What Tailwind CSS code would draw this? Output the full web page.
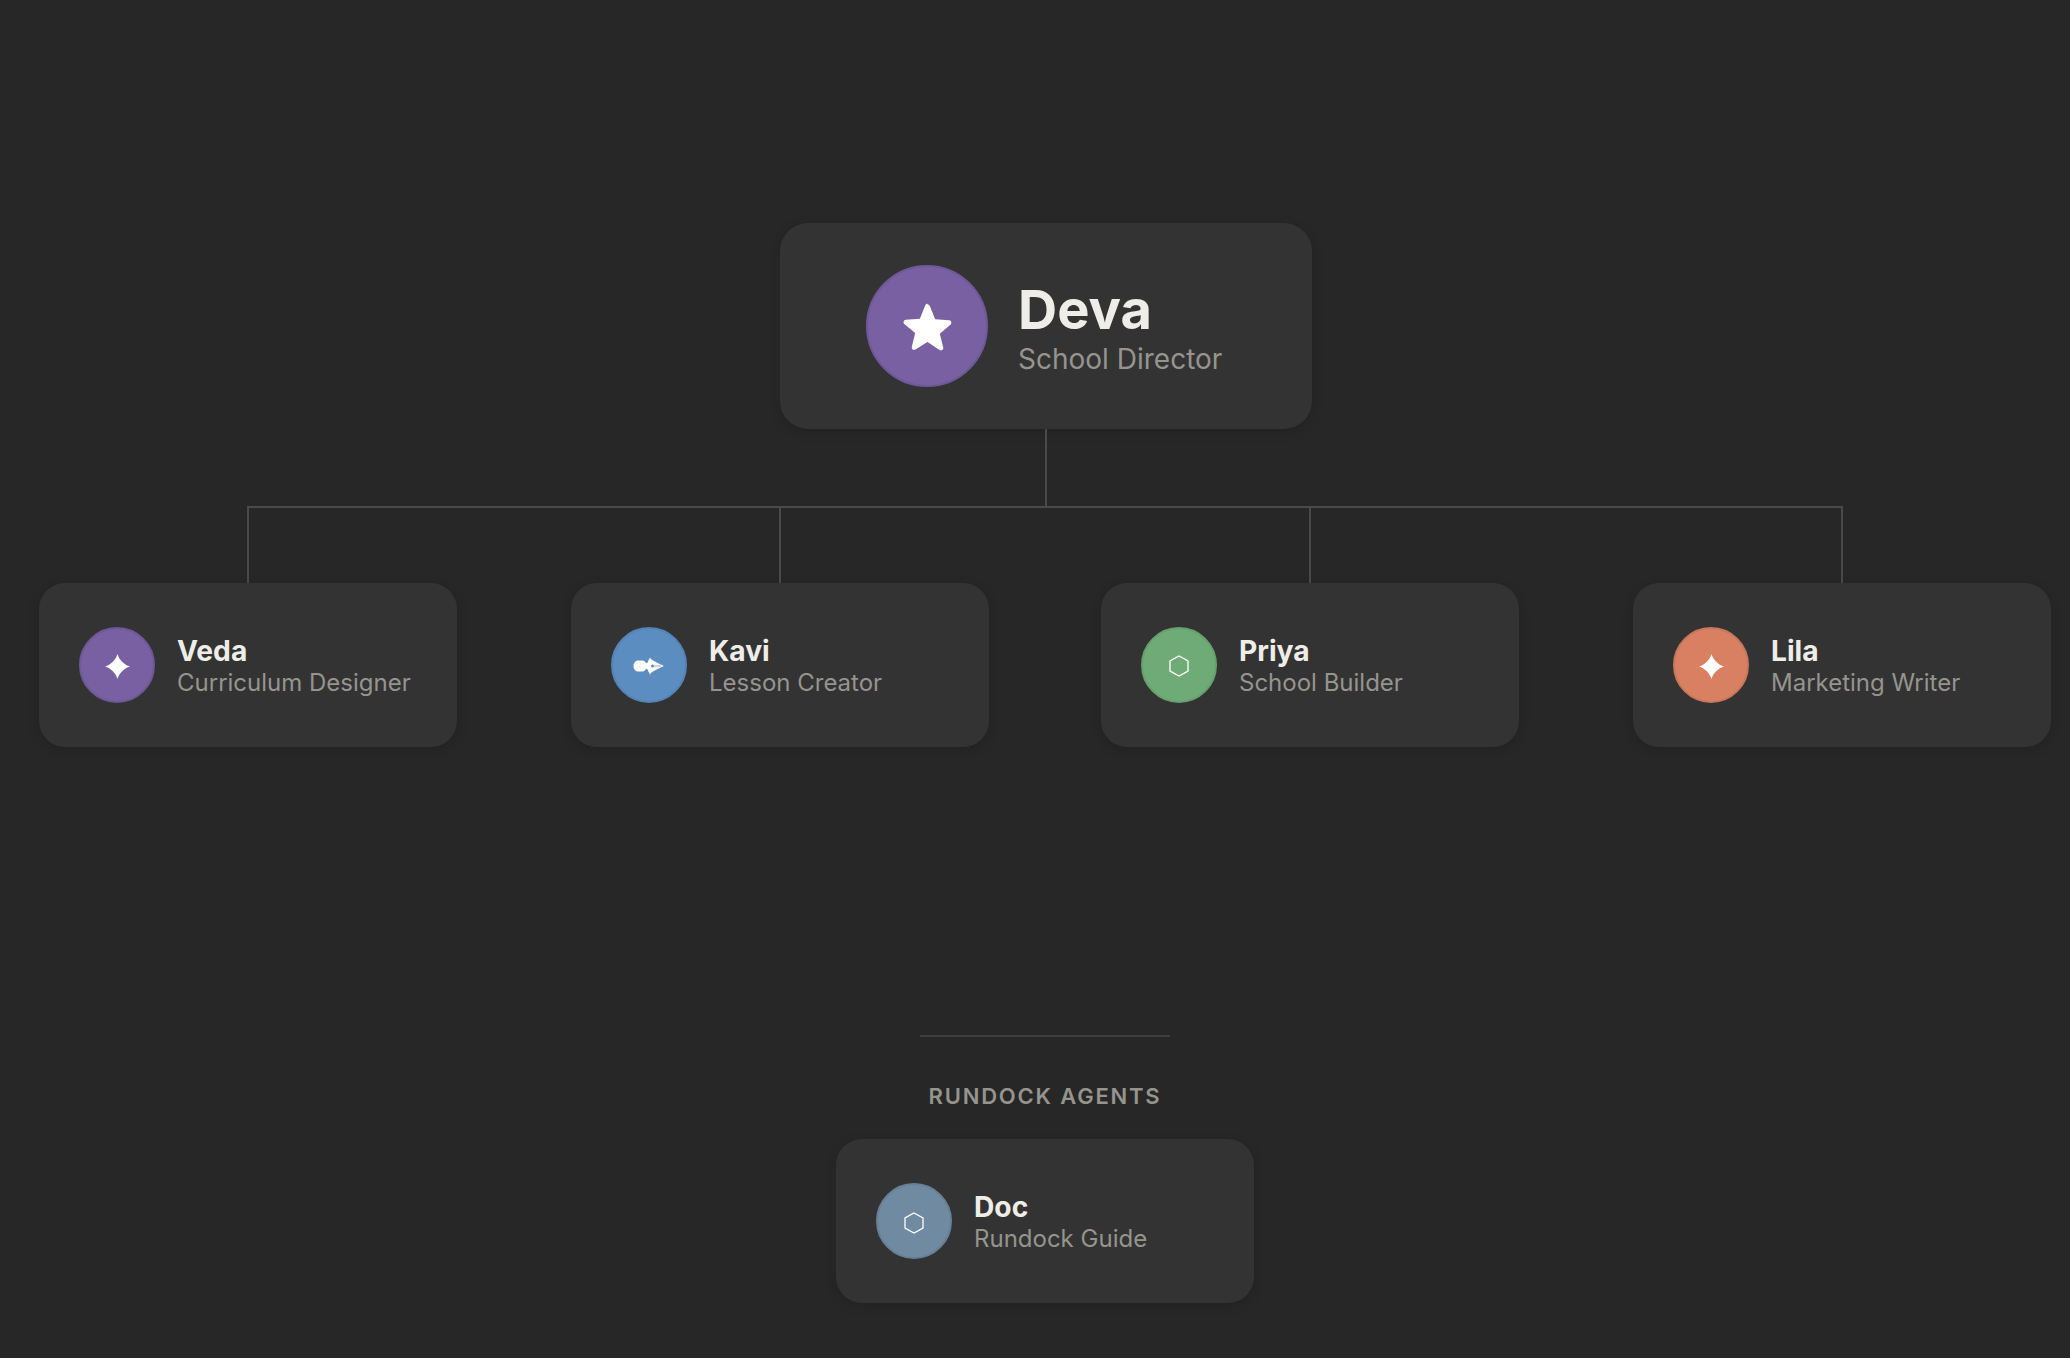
<!DOCTYPE html>
<html lang="en">
<head>
    <meta charset="UTF-8">
    <title>Org chart</title>
    <script src="https://cdn.jsdelivr.net/npm/@tailwindcss/browser@4"></script>
</head>
<body class="bg-[#272727] font-['Inter',sans-serif] h-[1358px] w-[2070px] overflow-hidden">
    <div class="flex flex-col items-center pt-[223px] pl-[39px] pr-[19px]">

        <!-- director -->
        <div class="ml-[2px] w-[532px] h-[206px] rounded-[28px] bg-[#333333] shadow-[0_3px_12px_rgba(0,0,0,0.15)] flex items-center pl-[86px] gap-[30px]">
            <div class="w-[122px] h-[122px] rounded-full bg-[#7860a3] border-2 border-[#6e5896] flex items-center justify-center shrink-0">
                <svg class="w-[51px] h-[51px]" viewBox="0 0 24 24" fill="#fff"><path d="M12 1.600c.5 0 .9.3 1.100.8l2.500 6.200 6.600.5c1 .1 1.400 1.300.7 2l-5.100 4.300 1.600 6.500c.2 1-.8 1.700-1.700 1.200L12 19.300l-5.700 3.500c-.9.5-1.900-.2-1.700-1.200l1.600-6.500-5.100-4.300c-.7-.7-.3-1.900.7-2l6.600-.5 2.500-6.200c.2-.5.6-.8 1.100-.8z"/></svg>
            </div>
            <div class="flex flex-col pt-[4px]">
                <div class="text-[54.200px] leading-[60px] font-[650] text-[#eeede8]">Deva</div>
                <div class="text-[28px] leading-[36px] text-[#96948e] mt-[2px]">School Director</div>
            </div>
        </div>

        <!-- connectors -->
        <div class="ml-[2px] w-[2px] h-[77px] bg-[#4a4a4a]"></div>
        <div class="w-full px-[208px]"><div class="h-[2px] bg-[#4a4a4a]"></div></div>

        <!-- team -->
        <div class="w-full flex">
            <div class="w-[418px] flex flex-col items-center">
                <div class="w-[2px] h-[75px] bg-[#4a4a4a]"></div>
                <div class="w-full h-[164px] rounded-[26px] bg-[#333333] shadow-[0_3px_12px_rgba(0,0,0,0.15)] flex items-center pl-[40px] gap-[22px]">
                    <div class="w-[76px] h-[76px] rounded-full bg-[#7860a3] border-2 border-[#6e5896] flex items-center justify-center shrink-0">
                        <svg class="w-[25px] h-[25px] mt-[2px]" viewBox="0 0 24 24" fill="#fff"><path d="M12 0C13.500 5.500 18.500 10.500 24 12 18.500 13.500 13.500 18.500 12 24 10.500 18.500 5.500 13.500 0 12 5.500 10.500 10.500 5.500 12 0z"/></svg>
                    </div>
                    <div class="flex flex-col pt-[2px]">
                        <div class="text-[28.200px] leading-[32px] font-[650] text-[#eeede8]">Veda</div>
                        <div class="text-[24px] leading-[31px] text-[#96948e]">Curriculum Designer</div>
                    </div>
                </div>
            </div>

            <div class="ml-[114px] w-[418px] flex flex-col items-center">
                <div class="w-[2px] h-[75px] bg-[#4a4a4a]"></div>
                <div class="w-full h-[164px] rounded-[26px] bg-[#333333] shadow-[0_3px_12px_rgba(0,0,0,0.15)] flex items-center pl-[40px] gap-[22px]">
                    <div class="w-[76px] h-[76px] rounded-full bg-[#5b8dc1] border-2 border-[#5483b5] flex items-center justify-center shrink-0">
                        <svg class="w-[32px] h-[18px] mt-[2px]" viewBox="0 0 32 18"><path fill="#fff" d="M5 3.500h4.500c1.800 0 2.700 1.800 4.500 3 .8-2.200 2-4 3-6 .8 1.500 2 2.500 4 3.500 3 1.500 6 3.500 10 5-4 1.500-7 3.500-10 5-2 1-3.200 2-4 3.500-1-2-2.200-3.800-3-6-1.800 1.200-2.700 3-4.500 3H5c-2.500 0-4.500-2.500-4.500-5.500S2.500 3.500 5 3.500z"/><circle cx="19.500" cy="9" r="1.500" fill="#5b8dc1"/><path d="M20.500 9h7.500" stroke="#5b8dc1" stroke-width=".7"/></svg>
                    </div>
                    <div class="flex flex-col pt-[2px]">
                        <div class="text-[28.200px] leading-[32px] font-[650] text-[#eeede8]">Kavi</div>
                        <div class="text-[24px] leading-[31px] text-[#96948e]">Lesson Creator</div>
                    </div>
                </div>
            </div>

            <div class="ml-[112px] w-[418px] flex flex-col items-center">
                <div class="w-[2px] h-[75px] bg-[#4a4a4a]"></div>
                <div class="w-full h-[164px] rounded-[26px] bg-[#333333] shadow-[0_3px_12px_rgba(0,0,0,0.15)] flex items-center pl-[40px] gap-[22px]">
                    <div class="w-[76px] h-[76px] rounded-full bg-[#6fab77] border-2 border-[#66a06f] flex items-center justify-center shrink-0">
                        <svg class="w-[20px] h-[22px] mt-[2px]" viewBox="0 0 20 22" fill="none" stroke="#fff" stroke-width="1.300"><path d="M10 1 19 6v10l-9 5-9-5V6z"/></svg>
                    </div>
                    <div class="flex flex-col pt-[2px]">
                        <div class="text-[28.200px] leading-[32px] font-[650] text-[#eeede8]">Priya</div>
                        <div class="text-[24px] leading-[31px] text-[#96948e]">School Builder</div>
                    </div>
                </div>
            </div>

            <div class="ml-[114px] w-[418px] flex flex-col items-center">
                <div class="w-[2px] h-[75px] bg-[#4a4a4a]"></div>
                <div class="w-full h-[164px] rounded-[26px] bg-[#333333] shadow-[0_3px_12px_rgba(0,0,0,0.15)] flex items-center pl-[40px] gap-[22px]">
                    <div class="w-[76px] h-[76px] rounded-full bg-[#da8062] border-2 border-[#c9775c] flex items-center justify-center shrink-0">
                        <svg class="w-[25px] h-[25px] mt-[2px]" viewBox="0 0 24 24" fill="#fff"><path d="M12 0C13.500 5.500 18.500 10.500 24 12 18.500 13.500 13.500 18.500 12 24 10.500 18.500 5.500 13.500 0 12 5.500 10.500 10.500 5.500 12 0z"/></svg>
                    </div>
                    <div class="flex flex-col pt-[2px]">
                        <div class="text-[28.200px] leading-[32px] font-[650] text-[#eeede8]">Lila</div>
                        <div class="text-[24px] leading-[31px] text-[#96948e]">Marketing Writer</div>
                    </div>
                </div>
            </div>
        </div>

        <!-- rundock agents -->
        <div class="w-[250px] h-[2px] bg-[#3f3f3f] mt-[288px]"></div>
        <div class="mt-[45px] text-[22px] leading-[28px] font-semibold tracking-[1.800px] text-[#96948e]">RUNDOCK AGENTS</div>
        <div class="mt-[29px] w-[418px] h-[164px] rounded-[26px] bg-[#333333] shadow-[0_3px_12px_rgba(0,0,0,0.15)] flex items-center pl-[40px] gap-[22px]">
            <div class="w-[76px] h-[76px] rounded-full bg-[#6f8aa1] border-2 border-[#678097] flex items-center justify-center shrink-0">
                <svg class="w-[20px] h-[22px] mt-[3px]" viewBox="0 0 20 22" fill="none" stroke="#fff" stroke-width="1.300"><path d="M10 1 19 6v10l-9 5-9-5V6z"/></svg>
            </div>
            <div class="flex flex-col pt-[2px]">
                <div class="text-[28.200px] leading-[32px] font-[650] text-[#eeede8]">Doc</div>
                <div class="text-[24px] leading-[31px] text-[#96948e]">Rundock Guide</div>
            </div>
        </div>
    </div>
</body>
</html>
